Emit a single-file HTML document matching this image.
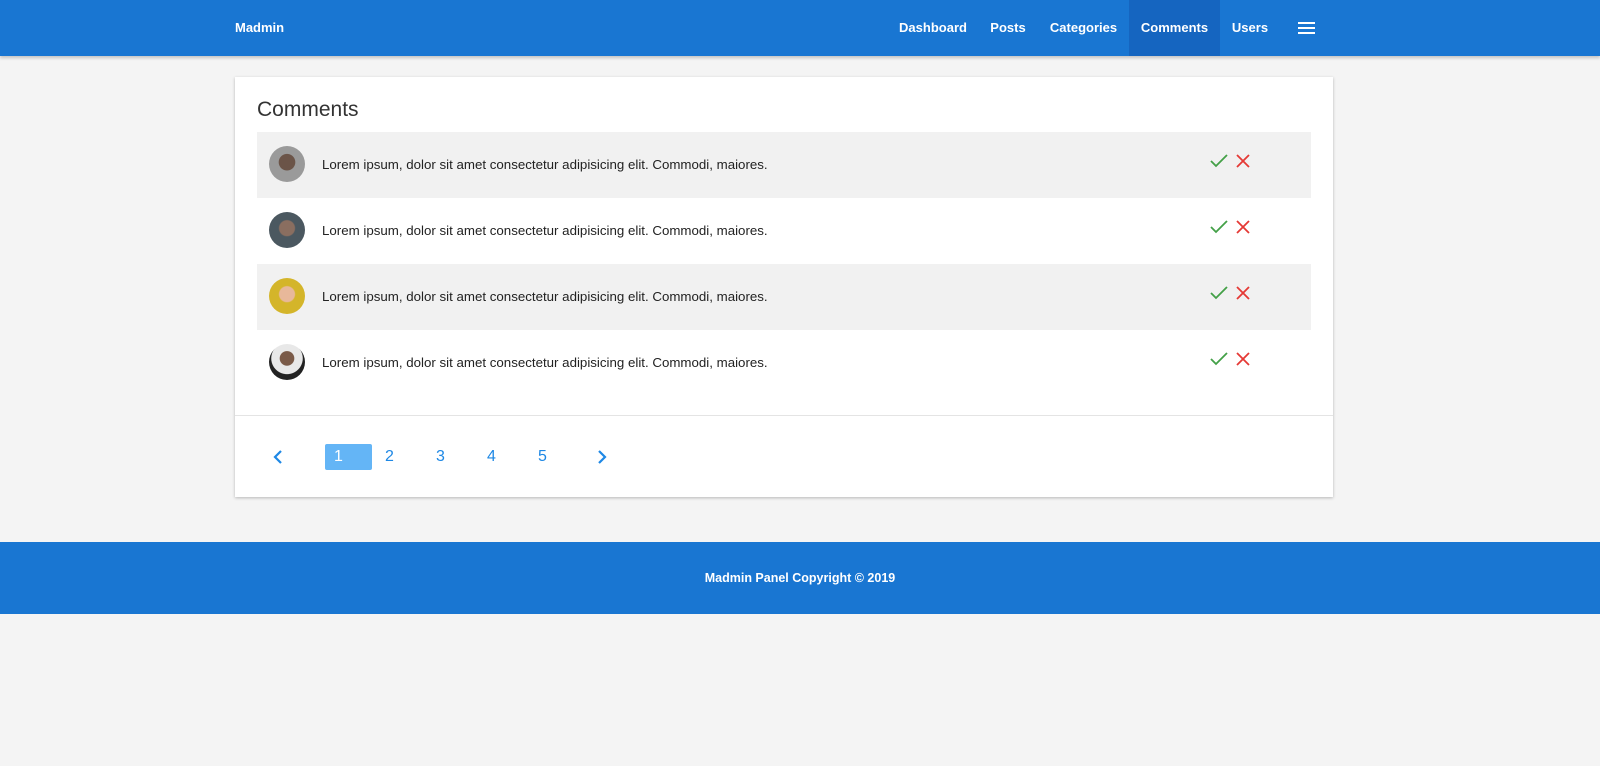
<!DOCTYPE html>
<html><head><meta charset="utf-8"><style>
*{box-sizing:border-box;margin:0;padding:0}
body{width:1600px;height:766px;background:#f4f4f4;font-family:"Liberation Sans",sans-serif;position:relative;overflow:hidden}
.nav{position:absolute;left:0;top:0;width:1600px;height:56px;background:#1976d2;box-shadow:0 2px 3px rgba(0,0,0,.2)}
.nav .brand{position:absolute;left:235px;top:20px;color:#fff;font-size:13px;font-weight:bold}
.nav a{position:absolute;top:0;height:56px;line-height:56px;color:#fff;font-size:13px;font-weight:bold;text-align:center}
.card{position:absolute;left:235px;top:77px;width:1098px;height:420px;background:#fff;box-shadow:0 1px 3px rgba(0,0,0,.25)}
.card h2{position:absolute;left:22px;top:21px;font-size:21px;font-weight:normal;color:#333}
.row{position:absolute;left:22px;width:1054px;height:66px}
.row.g{background:#f1f1f1}
.av{position:absolute;left:12px;top:14px;width:36px;height:36px;border-radius:50%}
.row p{position:absolute;left:65px;top:25px;font-size:13.3px;color:#222}
.row svg{position:absolute;top:22px}
.div{position:absolute;left:0;top:338px;width:1098px;height:1px;background:#e4e4e4}
.pg{position:absolute;top:367px;height:26px;line-height:26px;font-size:16px;color:#1e88e5;text-align:center;width:47px}
.foot{position:absolute;left:0;top:542px;width:1600px;height:72px;background:#1976d2;color:#fff;font-size:12.5px;font-weight:bold;text-align:center;line-height:72px}
</style></head><body>
<div class="nav">
<div class="brand">Madmin</div>
<a style="left:888px;width:90px">Dashboard</a>
<a style="left:978px;width:60px">Posts</a>
<a style="left:1038px;width:91px">Categories</a>
<a style="left:1129px;width:91px;background:#1565c0">Comments</a>
<a style="left:1220px;width:60px">Users</a>
<svg style="position:absolute;left:1298px;top:21px" width="17" height="14"><path d="M0 2h17M0 7h17M0 12h17" stroke="#fff" stroke-width="2"/></svg>
</div>
<div class="card">
<h2>Comments</h2>
<div class="row g" style="top:55px"><div class="av" style="background:radial-gradient(circle at 50% 45%,#6b5448 0 30%,#9a9a9a 32%)"></div><p>Lorem ipsum, dolor sit amet consectetur adipisicing elit. Commodi, maiores.</p>
<svg style="left:953px" width="18" height="14"><path d="M1 7l5 5L17 1" fill="none" stroke="#43a047" stroke-width="1.8"/></svg><svg style="left:979px" width="14" height="14"><path d="M1 1l12 12M13 1L1 13" stroke="#e53935" stroke-width="1.8"/></svg></div>
<div class="row" style="top:121px"><div class="av" style="background:radial-gradient(circle at 50% 45%,#8a6e60 0 28%,#4b5860 32%)"></div><p>Lorem ipsum, dolor sit amet consectetur adipisicing elit. Commodi, maiores.</p>
<svg style="left:953px" width="18" height="14"><path d="M1 7l5 5L17 1" fill="none" stroke="#43a047" stroke-width="1.8"/></svg><svg style="left:979px" width="14" height="14"><path d="M1 1l12 12M13 1L1 13" stroke="#e53935" stroke-width="1.8"/></svg></div>
<div class="row g" style="top:187px"><div class="av" style="background:radial-gradient(circle at 50% 45%,#e8b89a 0 28%,#d4b52a 32%)"></div><p>Lorem ipsum, dolor sit amet consectetur adipisicing elit. Commodi, maiores.</p>
<svg style="left:953px" width="18" height="14"><path d="M1 7l5 5L17 1" fill="none" stroke="#43a047" stroke-width="1.8"/></svg><svg style="left:979px" width="14" height="14"><path d="M1 1l12 12M13 1L1 13" stroke="#e53935" stroke-width="1.8"/></svg></div>
<div class="row" style="top:253px"><div class="av" style="background:radial-gradient(circle at 50% 40%,#7a5a48 0 25%,#e8e8e8 27% 55%,#222 57%)"></div><p>Lorem ipsum, dolor sit amet consectetur adipisicing elit. Commodi, maiores.</p>
<svg style="left:953px" width="18" height="14"><path d="M1 7l5 5L17 1" fill="none" stroke="#43a047" stroke-width="1.8"/></svg><svg style="left:979px" width="14" height="14"><path d="M1 1l12 12M13 1L1 13" stroke="#e53935" stroke-width="1.8"/></svg></div>
<div class="div"></div>
<svg style="position:absolute;left:38px;top:373px" width="10" height="14"><path d="M8 1L2 7l6 6" fill="none" stroke="#1e88e5" stroke-width="2.2"/></svg>
<div class="pg" style="left:90px;background:#64b5f6;color:#fff;border-radius:2px;text-align:left;padding-left:9px">1</div>
<div class="pg" style="left:131px;width:47px">2</div>
<div class="pg" style="left:182px">3</div>
<div class="pg" style="left:233px">4</div>
<div class="pg" style="left:284px">5</div>
<svg style="position:absolute;left:362px;top:373px" width="10" height="14"><path d="M2 1l6 6-6 6" fill="none" stroke="#1e88e5" stroke-width="2.2"/></svg>
</div>
<div class="foot">Madmin Panel Copyright © 2019</div>
</body></html>
